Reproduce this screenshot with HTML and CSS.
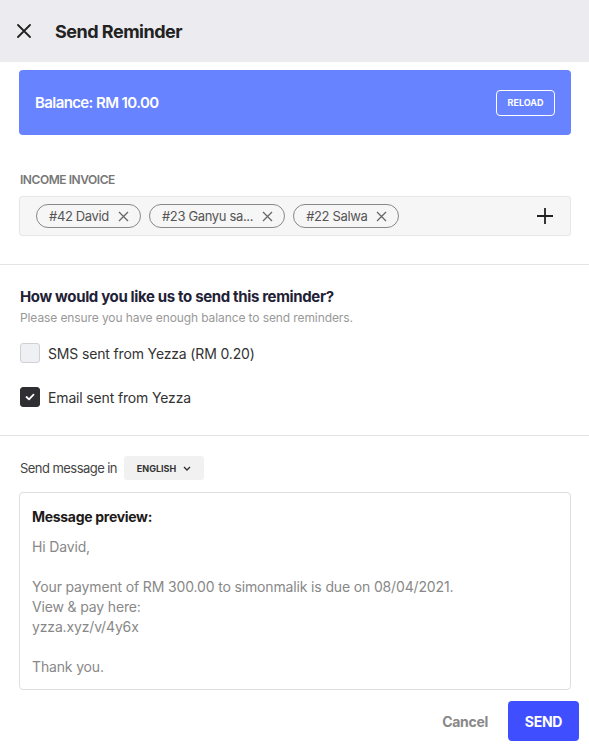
FILE: index.html
```html
<!DOCTYPE html>
<html>
<head>
<meta charset="utf-8">
<link rel="stylesheet" href="styles.css">
</head>
<body>
<div class="modal">
  <header class="topbar">
    <svg class="close" width="14" height="14" viewBox="0 0 14 14"><path d="M1 1L13 13M13 1L1 13" stroke="#222" stroke-width="1.8" stroke-linecap="round"/></svg>
    <h1 class="title">Send Reminder</h1>
  </header>

  <section class="block">
    <div class="balance">
      <span class="balance-text">Balance: RM 10.00</span>
      <button class="reload">RELOAD</button>
    </div>
    <div class="label">INCOME INVOICE</div>
    <div class="invoice-input">
      <div class="chips">
        <span class="chip">#42 David <svg width="11" height="11" viewBox="0 0 11 11"><path d="M1 1L10 10M10 1L1 10" stroke="#666" stroke-width="1.3"/></svg></span>
        <span class="chip">#23 Ganyu sa... <svg width="11" height="11" viewBox="0 0 11 11"><path d="M1 1L10 10M10 1L1 10" stroke="#666" stroke-width="1.3"/></svg></span>
        <span class="chip">#22 Salwa <svg width="11" height="11" viewBox="0 0 11 11"><path d="M1 1L10 10M10 1L1 10" stroke="#666" stroke-width="1.3"/></svg></span>
      </div>
      <svg class="plus" width="16" height="16" viewBox="0 0 16 16"><path d="M8 0V16M0 8H16" stroke="#222" stroke-width="1.8"/></svg>
    </div>
  </section>

  <hr class="divider">

  <section class="block">
    <h2 class="question">How would you like us to send this reminder?</h2>
    <p class="hint">Please ensure you have enough balance to send reminders.</p>
    <div class="option first">
      <span class="box"></span>
      <span class="opt-text">SMS sent from Yezza (RM 0.20)</span>
    </div>
    <div class="option">
      <span class="box checked"><svg width="10" height="8" viewBox="0 0 10 8"><path d="M1.5 4L4 6.3L8.5 1.7" stroke="#fff" stroke-width="1.8" fill="none" stroke-linecap="round" stroke-linejoin="round"/></svg></span>
      <span class="opt-text">Email sent from Yezza</span>
    </div>
  </section>

  <hr class="divider second">

  <section class="block">
    <div class="lang-row">
      <span class="lang-label">Send message in</span>
      <span class="lang-select">ENGLISH <svg width="8" height="5" viewBox="0 0 8 5"><path d="M1 1L4 4L7 1" stroke="#333" stroke-width="1.4" fill="none"/></svg></span>
    </div>
    <div class="preview">
      <div class="preview-title">Message preview:</div>
      <div class="preview-body">Hi David,<br><br>Your payment of RM 300.00 to simonmalik is due on 08/04/2021.<br>View &amp; pay here:<br>yzza.xyz/v/4y6x<br><br>Thank you.</div>
    </div>
  </section>

  <footer class="actions">
    <button class="cancel">Cancel</button>
    <button class="send">SEND</button>
  </footer>
</div>
</body>
</html>
```

FILE: styles.css
```css
* { box-sizing: border-box; }
html, body { margin: 0; padding: 0; background: #fff; }
body { font-family: Inter, "Noto Sans", sans-serif; color: #222; width: 589px; }

.topbar {
  height: 62px;
  background: #ececf0;
  display: flex;
  align-items: center;
  padding-left: 17px;
}
.close { display: block; }
.title {
  margin: 0 0 0 24px;
  font-size: 18px;
  font-weight: 700;
  color: #222;
  letter-spacing: -0.5px;
}

.block { padding: 0 18px 0 19px; }

.balance {
  margin-top: 8px;
  height: 65px;
  background: #6783ff;
  border-radius: 4px;
  display: flex;
  align-items: center;
  justify-content: space-between;
  padding: 0 16px 0 16px;
}
.balance-text { color: #fff; font-size: 15px; font-weight: 600; letter-spacing: -0.6px; }
.reload {
  font-family: inherit;
  background: transparent;
  color: #fff;
  border: 1px solid #fff;
  border-radius: 4px;
  height: 26px;
  width: 59px;
  padding: 0;
  font-size: 9px;
  font-weight: 700;
}

.label {
  margin-top: 38px;
  padding-left: 1px;
  font-size: 12px;
  line-height: 14px;
  font-weight: 600;
  color: #777;
  letter-spacing: -0.45px;
}
.invoice-input {
  margin-top: 9px;
  height: 40px;
  background: #f6f6f6;
  border: 1px solid #e6e6e6;
  border-radius: 3px;
  display: flex;
  align-items: center;
  justify-content: space-between;
  padding: 0 17px 0 16px;
}
.chips { display: flex; gap: 8px; }
.chip {
  height: 24px;
  border: 1px solid #888;
  border-radius: 12px;
  display: inline-flex;
  align-items: center;
  gap: 9px;
  padding: 0 11px 0 12px;
  font-size: 13px;
  color: #555;
  letter-spacing: -0.35px;
}

.divider {
  margin: 28px 0 0 0;
  border: 0;
  border-top: 1px solid #e4e4e4;
  height: 0;
}

.question {
  margin: 22px 0 0 1px;
  font-size: 15px;
  line-height: 20px;
  font-weight: 700;
  color: #1f2236;
  letter-spacing: -0.35px;
}
.hint {
  margin: 3px 0 0 1px;
  font-size: 12px;
  line-height: 16px;
  color: #999;
  letter-spacing: -0.1px;
}
.option {
  display: flex;
  align-items: center;
  margin-top: 24px;
  height: 20px;
  padding-left: 1px;
}
.option.first { margin-top: 17px; }
.box {
  width: 20px;
  height: 20px;
  border-radius: 3px;
  background: #eef0f4;
  border: 1px solid #cfd1d6;
  display: flex;
  align-items: center;
  justify-content: center;
}
.box.checked { background: #2f2f33; border-color: #2f2f33; }
.opt-text { margin-left: 8px; font-size: 14px; color: #333; letter-spacing: -0.15px; }

.lang-row {
  margin-top: 20px;
  display: flex;
  align-items: center;
  height: 24px;
  padding-left: 1px;
}
.lang-label { font-size: 13px; color: #444; letter-spacing: -0.55px; }
.lang-select {
  margin-left: 7px;
  height: 24px;
  width: 80px;
  background: #f1f1f1;
  border-radius: 3px;
  display: inline-flex;
  align-items: center;
  justify-content: center;
  gap: 7px;
  font-size: 9px;
  font-weight: 700;
  color: #333;
}

.preview {
  margin-top: 12px;
  height: 198px;
  border: 1px solid #dedede;
  border-radius: 4px;
  padding: 14px 13px 0 12px;
}
.preview-title {
  font-size: 14px;
  line-height: 20px;
  font-weight: 700;
  color: #1e1a1a;
  letter-spacing: -0.3px;
}
.preview-body {
  margin-top: 10px;
  font-size: 14px;
  line-height: 20px;
  color: #888;
  letter-spacing: -0.15px;
}

.actions {
  margin-top: 11px;
  display: flex;
  justify-content: flex-end;
  align-items: center;
  padding-right: 10px;
}
.cancel {
  font-family: inherit;
  background: none;
  border: 0;
  font-size: 14px;
  font-weight: 700;
  color: #888;
  margin-right: 20px;
  padding: 0;
  letter-spacing: -0.3px;
}
.send {
  font-family: inherit;
  width: 71px;
  height: 40px;
  background: #3f4fff;
  color: #fff;
  border: 0;
  border-radius: 4px;
  font-size: 14px;
  font-weight: 700;
  letter-spacing: -0.3px;
}
```
